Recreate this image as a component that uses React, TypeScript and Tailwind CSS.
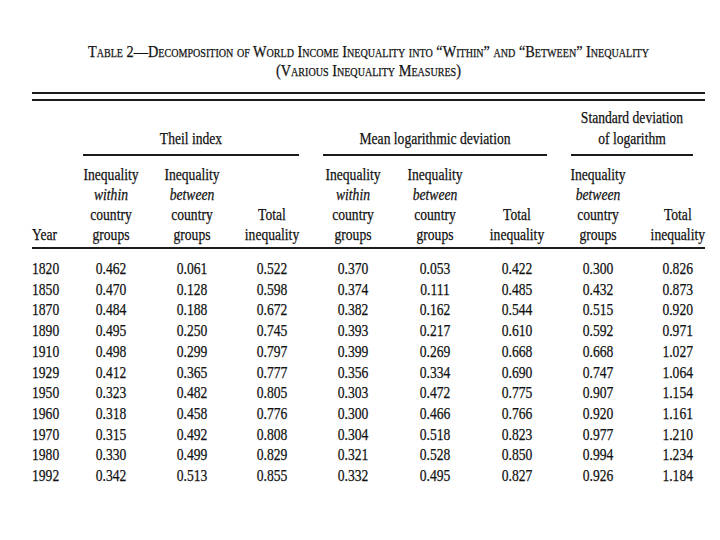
const rows: string[][] = [
  ["1820", "0.462", "0.061", "0.522", "0.370", "0.053", "0.422", "0.300", "0.826"],
  ["1850", "0.470", "0.128", "0.598", "0.374", "0.111", "0.485", "0.432", "0.873"],
  ["1870", "0.484", "0.188", "0.672", "0.382", "0.162", "0.544", "0.515", "0.920"],
  ["1890", "0.495", "0.250", "0.745", "0.393", "0.217", "0.610", "0.592", "0.971"],
  ["1910", "0.498", "0.299", "0.797", "0.399", "0.269", "0.668", "0.668", "1.027"],
  ["1929", "0.412", "0.365", "0.777", "0.356", "0.334", "0.690", "0.747", "1.064"],
  ["1950", "0.323", "0.482", "0.805", "0.303", "0.472", "0.775", "0.907", "1.154"],
  ["1960", "0.318", "0.458", "0.776", "0.300", "0.466", "0.766", "0.920", "1.161"],
  ["1970", "0.315", "0.492", "0.808", "0.304", "0.518", "0.823", "0.977", "1.210"],
  ["1980", "0.330", "0.499", "0.829", "0.321", "0.528", "0.850", "0.994", "1.234"],
  ["1992", "0.342", "0.513", "0.855", "0.332", "0.495", "0.827", "0.926", "1.184"],
];

const cols = "grid grid-cols-[39px_80px_82px_78px_84px_80px_84px_78px_68px]";

function Within() {
  return (
    <div className="text-center scale-x-[0.8]">
      Inequality
      <br />
      <i>within</i>
      <br />
      country
      <br />
      groups
    </div>
  );
}

function Between() {
  return (
    <div className="text-center scale-x-[0.8]">
      Inequality
      <br />
      <i>between</i>
      <br />
      country
      <br />
      groups
    </div>
  );
}

function Total() {
  return (
    <div className="text-center">
      Total
      <br />
      inequality
    </div>
  );
}

function Group({ label, span }: { label: React.ReactNode; span: string }) {
  return (
    <div className={`${span} flex flex-col justify-end`}>
      <div className="text-center leading-[21px] scale-x-[0.8]">{label}</div>
      <div className="h-[2px] bg-[#1c1c1c] mx-[12px] mt-[5px]" />
    </div>
  );
}

export default function App() {
  return (
    <div className="w-[720px] h-[540px] bg-white text-[#111] font-['Liberation_Serif',serif] pt-[42px] pl-[32px] [-webkit-text-stroke:0.25px_#111]">
      {/* TITLE */}
      <div className="w-[673px] text-center text-[17px] leading-[19px] [font-variant:small-caps] scale-x-[0.84]">
        <div>Table 2—Decomposition of World Income Inequality into “Within” and “Between” Inequality</div>
        <div>(Various Inequality Measures)</div>
      </div>

      {/* DOUBLE RULE */}
      <div className="w-[673px] mt-[12px]">
        <div className="h-[2px] bg-[#1c1c1c]" />
        <div className="h-[2px] bg-[#1c1c1c] mt-[5px]" />
      </div>

      <div className="text-[17px]">
        {/* GROUP HEADERS */}
        <div className={`${cols} mt-[6px]`}>
          <div />
          <Group span="col-span-3" label="Theil index" />
          <Group span="col-span-3" label="Mean logarithmic deviation" />
          <Group
            span="col-span-2"
            label={
              <>
                Standard deviation
                <br />
                of logarithm
              </>
            }
          />
        </div>

        {/* COLUMN HEADERS */}
        <div className={`${cols} mt-[9px] leading-[20px] items-end`}>
          <div className="scale-x-[0.8] origin-left">Year</div>
          <Within />
          <Between />
          <div className="scale-x-[0.8]">
            <Total />
          </div>
          <Within />
          <Between />
          <div className="scale-x-[0.8]">
            <Total />
          </div>
          <Between />
          <div className="flex justify-end scale-x-[0.8] origin-right">
            <Total />
          </div>
        </div>

        <div className="w-[673px] h-[2px] bg-[#1c1c1c] mt-[2px]" />

        {/* DATA */}
        <div className="mt-[10px]">
          {rows.map((r) => (
            <div key={r[0]} className={`${cols} leading-[20.7px]`}>
              <div className="scale-x-[0.8] origin-left">{r[0]}</div>
              {r.slice(1, 8).map((v, i) => (
                <div key={i} className="text-center scale-x-[0.8]">
                  {v}
                </div>
              ))}
              <div className="text-right pr-[15px] scale-x-[0.8] origin-right">{r[8]}</div>
            </div>
          ))}
        </div>
      </div>
    </div>
  );
}
